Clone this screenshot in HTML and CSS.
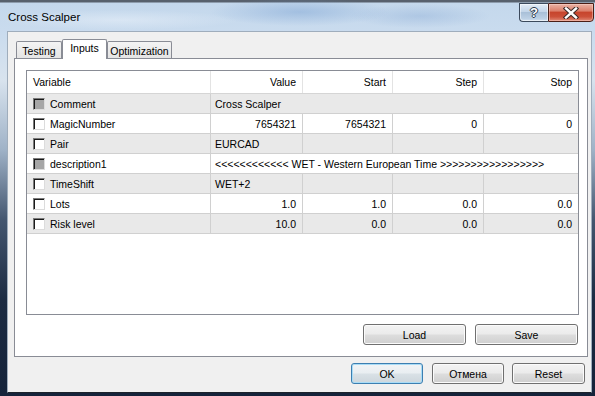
FILE: index.html
```html
<!DOCTYPE html>
<html lang="en">
<head>
    <meta charset="UTF-8">
    <title>Cross Scalper</title>
    <link rel="stylesheet" href="styles.css">
</head>
<body>
    <div class="window">
        <div class="titlebar">
            <span class="title">Cross Scalper</span>
            <div class="caption-buttons">
                <div class="cap-btn help">?</div>
                <div class="cap-btn close">
                    <svg width="16" height="12" viewBox="0 0 16 12">
                        <path d="M3 1.5 L13 10.5 M13 1.5 L3 10.5" stroke="#3a2a28" stroke-width="4.4" stroke-linecap="square"/>
                        <path d="M3 1.5 L13 10.5 M13 1.5 L3 10.5" stroke="#ffffff" stroke-width="2.4" stroke-linecap="square"/>
                    </svg>
                </div>
            </div>
        </div>

        <div class="client">
            <div class="tabs">
                <div class="tab tab-testing">Testing</div>
                <div class="tab tab-inputs active">Inputs</div>
                <div class="tab tab-opt">Optimization</div>
            </div>

            <div class="tab-panel">
                <div class="grid">
                    <div class="row head">
                        <div class="cell var">Variable</div>
                        <div class="cell num">Value</div>
                        <div class="cell num">Start</div>
                        <div class="cell num">Step</div>
                        <div class="cell num">Stop</div>
                    </div>
                    <div class="row alt">
                        <div class="cell var"><span class="check grey"></span>Comment</div>
                        <div class="cell span">Cross Scalper</div>
                    </div>
                    <div class="row">
                        <div class="cell var"><span class="check"></span>MagicNumber</div>
                        <div class="cell num">7654321</div>
                        <div class="cell num">7654321</div>
                        <div class="cell num">0</div>
                        <div class="cell num">0</div>
                    </div>
                    <div class="row alt">
                        <div class="cell var"><span class="check"></span>Pair</div>
                        <div class="cell">EURCAD</div>
                        <div class="cell"></div>
                        <div class="cell"></div>
                        <div class="cell"></div>
                    </div>
                    <div class="row">
                        <div class="cell var"><span class="check grey"></span>description1</div>
                        <div class="cell span">&lt;&lt;&lt;&lt;&lt;&lt;&lt;&lt;&lt;&lt;&lt;&lt; WET - Western European Time &gt;&gt;&gt;&gt;&gt;&gt;&gt;&gt;&gt;&gt;&gt;&gt;&gt;&gt;&gt;&gt;&gt;</div>
                    </div>
                    <div class="row alt">
                        <div class="cell var"><span class="check"></span>TimeShift</div>
                        <div class="cell">WET+2</div>
                        <div class="cell"></div>
                        <div class="cell"></div>
                        <div class="cell"></div>
                    </div>
                    <div class="row">
                        <div class="cell var"><span class="check"></span>Lots</div>
                        <div class="cell num">1.0</div>
                        <div class="cell num">1.0</div>
                        <div class="cell num">0.0</div>
                        <div class="cell num">0.0</div>
                    </div>
                    <div class="row alt">
                        <div class="cell var"><span class="check"></span>Risk level</div>
                        <div class="cell num">10.0</div>
                        <div class="cell num">0.0</div>
                        <div class="cell num">0.0</div>
                        <div class="cell num">0.0</div>
                    </div>
                </div>

                <div class="panel-buttons">
                    <button class="btn wide">Load</button>
                    <button class="btn wide">Save</button>
                </div>
            </div>

            <div class="dialog-buttons">
                <button class="btn default">OK</button>
                <button class="btn">Отмена</button>
                <button class="btn reset">Reset</button>
            </div>
        </div>
    </div>
</body>
</html>
```

FILE: styles.css
```css
body {
    margin: 0;
    width: 595px;
    height: 396px;
    overflow: hidden;
    font-family: "Liberation Sans", Arial, sans-serif;
    font-size: 10.5px;
    color: #000;
}

.window {
    height: 396px;
    box-sizing: border-box;
    display: flex;
    flex-direction: column;
    padding: 0 3px 3px 7px;
    background: linear-gradient(to bottom,
        #58616d 0, #58616d 2px,
        #c4d8ec 3px, #c9dbee 30px,
        #d8e3ee 80px, #9fb2c7 150px,
        #44566f 220px, #1c2b42 300px, #15233a 396px);
}

/* title bar */
.titlebar {
    height: 31px;
    flex: none;
    display: flex;
    justify-content: space-between;
    align-items: flex-start;
    margin: 0 -3px 0 -7px;
    padding-left: 8px;
    padding-right: 1px;
    background:
        radial-gradient(ellipse 90px 14px at 300px 12px, rgba(120,160,210,0.45), transparent),
        radial-gradient(ellipse 70px 12px at 420px 16px, rgba(130,165,210,0.35), transparent),
        radial-gradient(ellipse 120px 10px at 120px 20px, rgba(235,242,250,0.5), transparent);
}

.title {
    font-size: 11.5px;
    line-height: 12px;
    margin-top: 11px;
    color: #000;
}

.caption-buttons {
    display: flex;
    margin-top: 3px;
}

.cap-btn {
    height: 19px;
    box-sizing: border-box;
    display: flex;
    align-items: center;
    justify-content: center;
    border: 1px solid #3c4a5c;
}

.help {
    width: 29px;
    border-right: none;
    border-radius: 0 0 0 4px;
    background: linear-gradient(to bottom, #e3ecf6 0%, #c3d5e8 45%, #a9c0d8 50%, #bcd0e4 85%, #d2e1f0 100%);
    box-shadow: inset 0 0 0 1px rgba(255,255,255,0.55);
    color: #fff;
    font-weight: bold;
    font-size: 13px;
    text-shadow: 1px 0 0 #2c3a4c, -1px 0 0 #2c3a4c, 0 1px 0 #2c3a4c, 0 -1px 0 #2c3a4c;
}

.close {
    width: 46px;
    border-color: #4a1e16;
    border-radius: 0 0 4px 0;
    background: linear-gradient(to bottom, #eab3a6 0%, #dc806c 40%, #c7452d 50%, #cc5039 75%, #e08c78 100%);
    box-shadow: inset 0 0 0 1px rgba(255,220,210,0.45);
}

/* client area */
.client {
    flex: 1;
    display: flex;
    flex-direction: column;
    background: #f0f0f0;
    border: 1px solid #9fadbc;
    border-bottom-color: #1c232c;
    padding: 7px 3px 8px 6px;
}

.tabs {
    height: 19px;
    display: flex;
    align-items: flex-end;
    padding-left: 2px;
    position: relative;
    z-index: 1;
}

.tab {
    height: 17px;
    box-sizing: border-box;
    border: 1px solid #898c95;
    border-bottom: none;
    border-radius: 2px 2px 0 0;
    background: linear-gradient(to bottom, #f4f4f4, #e4e4e4);
    display: flex;
    align-items: center;
    justify-content: center;
    padding-top: 2px;
}

.tab-testing { width: 46px; }
.tab-inputs { width: 45px; }
.tab-opt { width: 65px; }

.tab.active {
    height: 20px;
    margin-bottom: -1px;
    background: #fff;
    padding-top: 0;
    padding-bottom: 3px;
}

.tab-panel {
    height: 299px;
    box-sizing: border-box;
    border: 1px solid #898c95;
    background: #fff;
    padding: 11px 8px 11px 11px;
    display: flex;
    flex-direction: column;
}

/* parameters grid */
.grid {
    height: 245px;
    box-sizing: border-box;
    border: 1px solid #898c95;
    background: #fff;
}

.row {
    display: grid;
    grid-template-columns: 184px 92px 90px 91px 94px;
    height: 20px;
    box-sizing: border-box;
    border-bottom: 1px solid #d0d0d0;
}

.row.alt {
    background: #e9e9e9;
}

.row.head {
    height: 23px;
    border-bottom-color: #d5d5d5;
}

.cell {
    display: flex;
    align-items: center;
    padding: 0 6px 0 4px;
    border-right: 1px solid #d0d0d0;
    white-space: nowrap;
    overflow: hidden;
}

.head .cell {
    border-right-color: #e3e3e3;
}

.cell:last-child {
    border-right: none;
}

.cell.num {
    justify-content: flex-end;
}

.cell.var {
    padding-left: 6px;
}

.cell.span {
    grid-column: 2 / 6;
}

.check {
    width: 12px;
    height: 12px;
    box-sizing: border-box;
    margin-right: 5px;
    flex: none;
    background: #fff;
    border: 1px solid;
    border-color: #7a7a7a #dcdcdc #dcdcdc #7a7a7a;
    box-shadow: inset 1px 1px 0 #1a1a1a;
}

.check.grey {
    background: #a6a6a6;
}

/* buttons */
.btn {
    height: 21px;
    box-sizing: border-box;
    font-family: "Liberation Sans", Arial, sans-serif;
    font-size: 10.5px;
    color: #000;
    padding: 0;
    border: 1px solid #707070;
    border-radius: 3px;
    background: linear-gradient(to bottom, #f3f3f3 0%, #ebebeb 48%, #dddddd 52%, #cfcfcf 100%);
    box-shadow: inset 0 0 0 1px #fbfbfb;
}

.panel-buttons {
    display: flex;
    justify-content: flex-end;
    gap: 9px;
    margin-top: 9px;
    padding-right: 1px;
}

.btn.wide {
    width: 103px;
}

.dialog-buttons {
    display: flex;
    justify-content: flex-end;
    gap: 9px;
    margin-top: 6px;
    padding-right: 3px;
}

.dialog-buttons .btn {
    width: 72px;
}

.dialog-buttons .btn.reset {
    width: 73px;
    margin-left: -1px;
}

.btn.default {
    border-color: #3c7fb1;
    box-shadow: inset 0 0 0 1px #a9dcf6;
    background: linear-gradient(to bottom, #f1f4f6 0%, #e9eef1 48%, #d9e1e6 52%, #cdd6dc 100%);
}
```
